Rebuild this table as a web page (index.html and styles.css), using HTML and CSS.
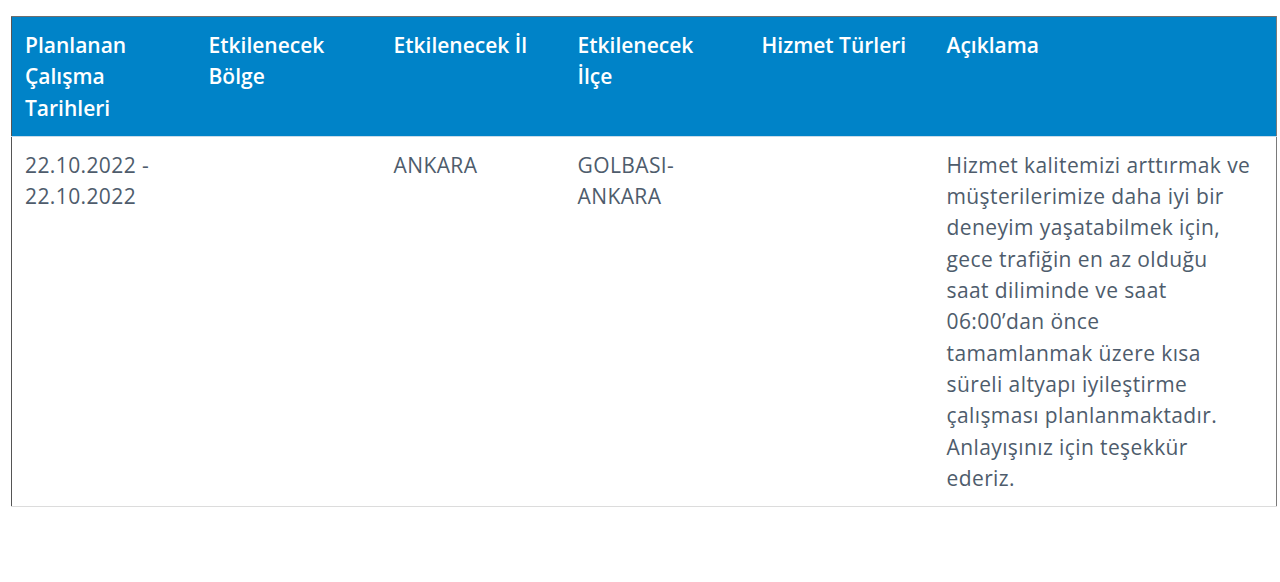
FILE: index.html
```html
<!DOCTYPE html>
<html lang="tr">
<head>
    <meta charset="UTF-8">
    <meta name="viewport" content="width=device-width, initial-scale=1.0">
    <title>Planlanan Çalışmalar</title>
    <link rel="stylesheet" href="styles.css">
</head>
<body>
    <table class="works">
        <colgroup>
            <col class="col-narrow">
            <col class="col-wide">
            <col class="col-narrow">
            <col class="col-narrow">
            <col class="col-wide">
            <col>
        </colgroup>
        <thead>
            <tr>
                <th>Planlanan Çalışma Tarihleri</th>
                <th>Etkilenecek Bölge</th>
                <th>Etkilenecek İl</th>
                <th>Etkilenecek İlçe</th>
                <th>Hizmet Türleri</th>
                <th>Açıklama</th>
            </tr>
        </thead>
        <tbody>
            <tr>
                <td>22.10.2022 - 22.10.2022</td>
                <td></td>
                <td>ANKARA</td>
                <td>GOLBASI-ANKARA</td>
                <td></td>
                <td class="desc">Hizmet kalitemizi arttırmak ve<br>
                    müşterilerimize daha iyi bir<br>
                    deneyim yaşatabilmek için,<br>
                    gece trafiğin en az olduğu<br>
                    saat diliminde ve saat<br>
                    06:00’dan önce<br>
                    tamamlanmak üzere kısa<br>
                    süreli altyapı iyileştirme<br>
                    çalışması planlanmaktadır.<br>
                    Anlayışınız için teşekkür<br>
                    ederiz.</td>
            </tr>
        </tbody>
    </table>
</body>
</html>
```
FILE: styles.css
```css
:root {
    --primary-font: "Open Sans", "Noto Sans", Arial, sans-serif;
    --head-bg: #0083c8;
    --text-color: #4e5c6c;
}

* {
    margin: 0;
    padding: 0;
    box-sizing: border-box;
}

body {
    font-family: var(--primary-font);
    background-color: #fff;
    padding: 16px 3px 0 11px;
}

.works {
    width: 100%;
    table-layout: fixed;
    border-collapse: collapse;
    border-top: 1px solid #6f6f6f;
    border-left: 1px solid #555;
    border-right: 1px solid #7a7a7a;
    border-bottom: 1px solid #dcdcdc;
    font-size: 21px;
    letter-spacing: 0.4px;
    line-height: 31.3px;
}

.col-narrow {
    width: 184px;
}

.col-wide {
    width: 185px;
}

.works th {
    background-color: var(--head-bg);
    color: #fff;
    font-weight: 600;
    letter-spacing: 0;
    text-align: left;
    vertical-align: top;
    padding: 13px 22px 12px 13px;
    border-bottom: 1px solid #c8dcea;
}

.works td {
    color: var(--text-color);
    vertical-align: top;
    padding: 13px 13px 12px;
}
```
